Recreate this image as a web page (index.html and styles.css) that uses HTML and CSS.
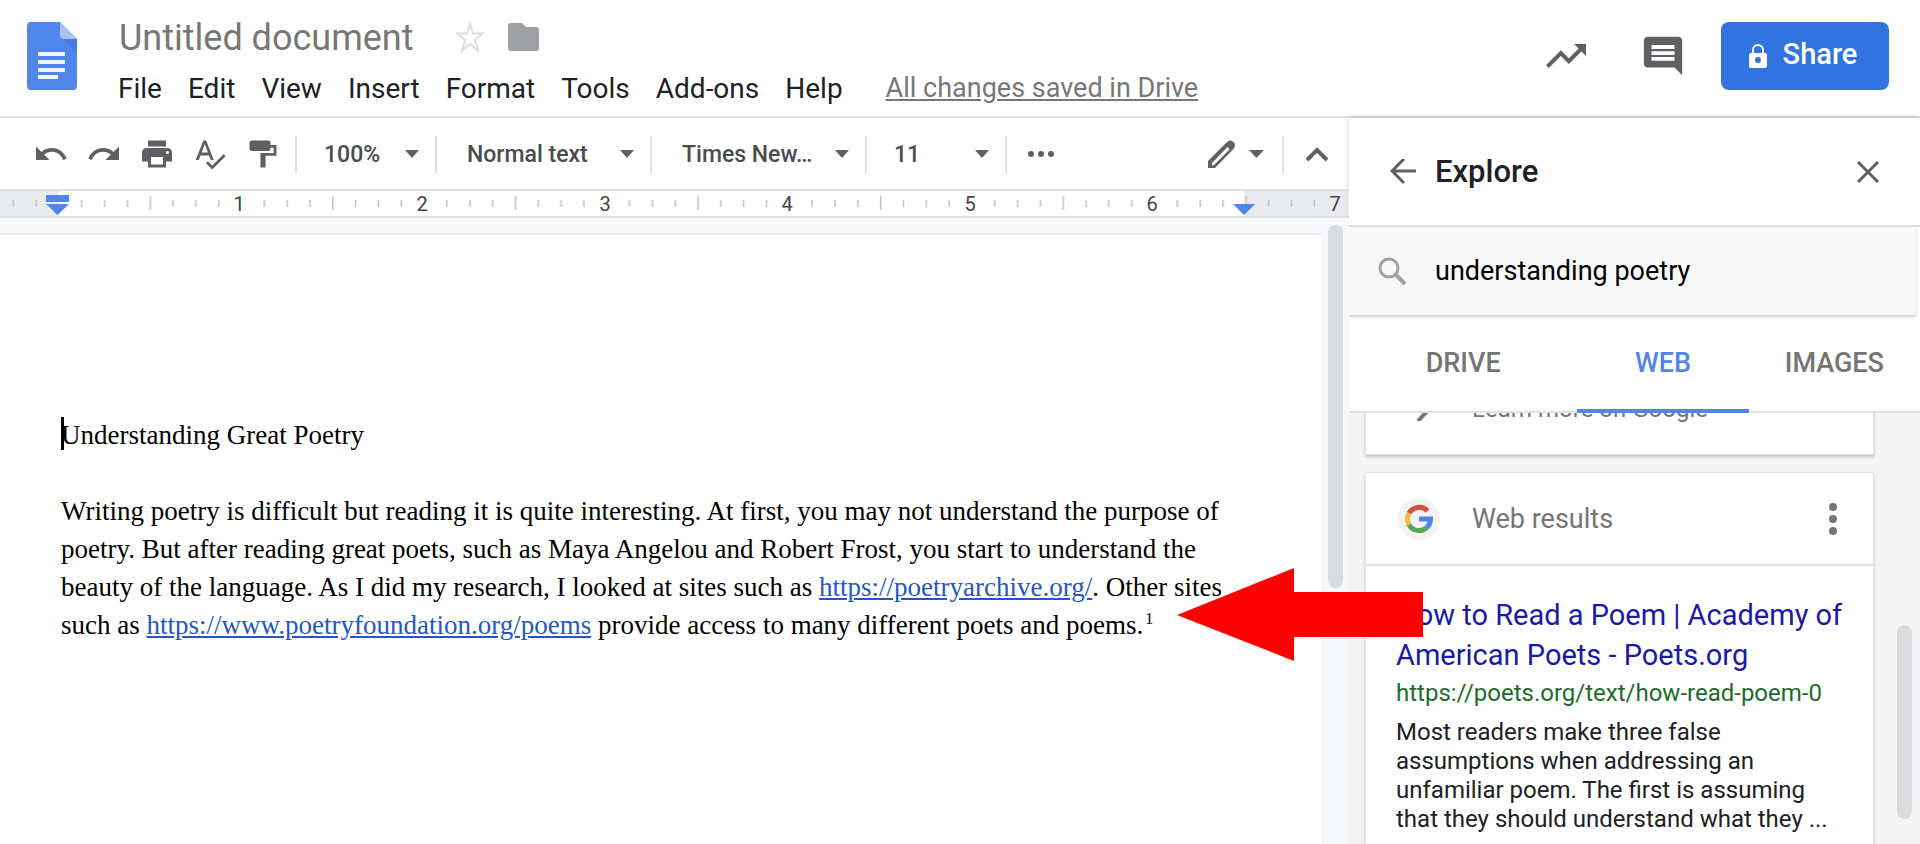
FILE: index.html
```
<!DOCTYPE html>
<html lang="en">
<head>
<meta charset="utf-8">
<title>Untitled document</title>
<link rel="stylesheet" href="styles.css">
</head>
<body>

<header class="top">
  <svg class="logo" viewBox="0 0 50 68">
    <path fill="#5086ec" d="M4 0h29l17 17v47a4 4 0 0 1-4 4H4a4 4 0 0 1-4-4V4a4 4 0 0 1 4-4z"/>
    <path fill="#3f6fd0" opacity=".5" d="M36 17h14v14z"/>
    <path fill="#a9c3f7" d="M33 0l17 17H37a4 4 0 0 1-4-4z"/>
    <path fill="#f1f5fe" d="M11 30h27v4H11zM11 38h27v4H11zM11 46h27v4H11zM11 53h20v4H11z"/>
  </svg>
  <div class="titles">
    <div class="titlerow">
      <input class="title" type="text" value="Untitled document" aria-label="Document name">
      <button class="ib" aria-label="Star"><svg width="30" height="32" viewBox="0 0 30 32"><path fill="none" stroke="#dcdcdc" stroke-width="2" d="M15 3l3 9.500h9.500l-7.500 6.500 3 10.500-8-6.500-8 6.500 3-10.500-7.500-6.500H12z"/></svg></button>
      <button class="ib" aria-label="Move to folder"><svg width="31" height="28" viewBox="0 0 31 28"><path fill="#9fa0a4" d="M3 0h11l4 4h10a3 3 0 0 1 3 3v18a3 3 0 0 1-3 3H3a3 3 0 0 1-3-3V3a3 3 0 0 1 3-3z"/></svg></button>
    </div>
    <nav class="menu">
      <button>File</button>
      <button>Edit</button>
      <button>View</button>
      <button>Insert</button>
      <button>Format</button>
      <button>Tools</button>
      <button>Add-ons</button>
      <button>Help</button>
      <a class="saved" href="#">All changes saved in Drive</a>
    </nav>
  </div>
  <div class="actions">
    <button class="ib" aria-label="Activity"><svg width="48" height="48" viewBox="0 0 24 24"><path d="M16 6l2.290 2.290-4.880 4.880-4-4L2 16.590 3.410 18l6-6 4 4 6.300-6.290L22 12V6z"/></svg></button>
    <button class="ib" aria-label="Comments"><svg width="46" height="46" viewBox="0 0 24 24"><path d="M22 4c0-1.100-.9-2-2-2H4c-1.100 0-2 .9-2 2v12c0 1.100.9 2 2 2h14l4 4zM18 14.500H6v-2h12zm0-3H6v-2h12zm0-3.200H6v-2h12z"/></svg></button>
    <button class="share">
      <svg width="18" height="24" viewBox="0 0 18 24"><path fill="none" stroke="#fff" stroke-width="2" d="M4 10V6a5 5 0 0 1 10 0v4"/><path fill="#fff" fill-rule="evenodd" d="M2 9h14a2 2 0 0 1 2 2v11a2 2 0 0 1-2 2H2a2 2 0 0 1-2-2V11a2 2 0 0 1 2-2zm7 4a3 3 0 1 0 0 6 3 3 0 0 0 0-6z"/></svg>
      <span>Share</span>
    </button>
  </div>
</header>

<div class="work">
  <main class="editor">
    <div class="toolbar">
      <button class="tb" aria-label="Undo"><svg viewBox="0 0 24 24"><path d="M12.500 8c-2.650 0-5.050.99-6.900 2.600L2 7v9h9l-3.620-3.620c1.390-1.160 3.160-1.880 5.120-1.880 3.540 0 6.550 2.310 7.600 5.500l2.370-.78C21.080 11.030 17.150 8 12.500 8z"/></svg></button>
      <button class="tb" aria-label="Redo"><svg viewBox="0 0 24 24"><path d="M18.400 10.600C16.550 8.990 14.150 8 11.500 8c-4.650 0-8.580 3.030-9.960 7.220L3.900 16c1.050-3.190 4.050-5.500 7.600-5.500 1.950 0 3.730.72 5.120 1.880L13 16h9V7l-3.600 3.600z"/></svg></button>
      <button class="tb" aria-label="Print"><svg viewBox="0 0 24 24"><path d="M19 8H5c-1.660 0-3 1.340-3 3v6h4v4h12v-4h4v-6c0-1.660-1.340-3-3-3zm-3 11H8v-5h8v5zm3-7c-.55 0-1-.45-1-1s.45-1 1-1 1 .45 1 1-.45 1-1 1zm-1-9H6v4h12V3z"/></svg></button>
      <button class="tb" aria-label="Spelling"><svg viewBox="0 0 24 24"><path d="M12.450 16h2.090L9.430 3H7.570L2.460 16h2.090l1.120-3h5.640l1.140 3zm-6.020-5L8.500 5.480 10.570 11H6.430zM21 12.200l-7.500 7.500L10.600 16.800l-1.300 1.300 4.200 4.200L22.400 13.500z"/></svg></button>
      <button class="tb" aria-label="Paint format"><svg viewBox="0 0 24 24"><path d="M4.500 3h11a1.500 1.500 0 0 1 1.500 1.500V6h4v7.200h-7.300V21h-3.400v-9.700h8.800V7.900H17V8.500A1.500 1.500 0 0 1 15.500 10h-11A1.500 1.500 0 0 1 3 8.500v-4A1.500 1.500 0 0 1 4.500 3z"/></svg></button>
      <div class="drop narrow first"><select aria-label="Zoom"><option>100%</option></select></div>
      <div class="drop"><select aria-label="Styles"><option>Normal text</option></select></div>
      <div class="drop"><select aria-label="Font"><option>Times New…</option></select></div>
      <div class="drop narrow"><select aria-label="Font size"><option>11</option></select></div>
      <button class="more" aria-label="More"><svg width="28" height="8" viewBox="0 0 28 8"><circle cx="4" cy="4" r="3"/><circle cx="14" cy="4" r="3"/><circle cx="24" cy="4" r="3"/></svg></button>
      <button class="mode" aria-label="Editing mode">
        <svg width="28" height="28" viewBox="0 0 28 28"><path fill-rule="evenodd" d="M0 21L19 2q3.500-3 6.500 0t0 7L7 28H0zM4 23v2.500h1.500L21.500 9.500l-2-2.500z"/></svg>
        <svg width="15" height="8" viewBox="0 0 15 8"><path d="M0 0h15L7.500 8z"/></svg>
      </button>
      <button class="hide" aria-label="Hide the menus"><svg width="24" height="15" viewBox="0 0 24 15"><path fill="none" stroke="#5f6064" stroke-width="4" d="M2 13L12 3l10 10"/></svg></button>
    </div>

    <svg class="ruler" height="25" viewBox="0 0 1349 25" preserveAspectRatio="xMinYMin slice">
      <defs>
        <!-- one inch of marks, half inch at the left edge -->
        <pattern id="inch" x="149.500" y="0" width="182.600" height="25" patternUnits="userSpaceOnUse">
          <path fill="#bfc0c2" d="M0 5h1.500v14H0zM22.800 9h1.500v7h-1.500zM45.600 9h1.500v7h-1.500zM68.500 9h1.500v7h-1.500zM114 9h1.500v7H114zM137 9h1.500v7H137zM159.800 9h1.500v7h-1.500z"/>
        </pattern>
      </defs>
      <path fill="#e8eaed" d="M0 0h59v25H0zM1245 0h104v25H1245z"/>
      <path fill="url(#inch)" d="M0 0h1349v25H0z"/>
      <text x="239" y="20">1</text>
      <text x="422" y="20">2</text>
      <text x="605" y="20">3</text>
      <text x="787" y="20">4</text>
      <text x="970" y="20">5</text>
      <text x="1152" y="20">6</text>
      <text x="1335" y="20">7</text>
      <path fill="#5086ec" d="M46 4h23v7H46zM46 13h23L57.500 24zM1233 13h22l-11 11z"/>
    </svg>

    <div class="canvas">
      <article class="paper">
        <p class="head">Understanding Great Poetry</p>
        <p>Writing poetry is difficult but reading it is quite interesting. At first, you may not understand the purpose of poetry. But after reading great poets, such as Maya Angelou and Robert Frost, you start to understand the beauty of the language. As I did my research, I looked at sites such as <a href="#">https://poetryarchive.org/</a>. Other sites such as <a href="#">https://www.poetryfoundation.org/poems</a> provide access to many different poets and poems.<sup>1</sup></p>
      </article>
      <div class="track"><div class="thumb docthumb"></div></div>
    </div>

    <svg class="arrow" width="246" height="93" viewBox="0 0 246 93"><path fill="#f00" d="M0 47L117 0v24h129v45H117v24z"/></svg>
  </main>

  <aside class="explore">
    <div class="exhead">
      <button class="ib" aria-label="Back"><svg width="26" height="26" viewBox="0 0 26 26"><path fill="none" stroke="#5f6064" stroke-width="3" d="M26 12H3M14 0L2 12l12 12"/></svg></button>
      <h2>Explore</h2>
      <button class="ib" aria-label="Close"><svg width="22" height="22" viewBox="0 0 22 22"><path fill="none" stroke="#5f6064" stroke-width="3" d="M1 1l20 20M21 1L1 21"/></svg></button>
    </div>
    <div class="search">
      <svg width="29" height="28" viewBox="0 0 29 28"><g fill="none" stroke="#a2a2a2"><circle cx="11" cy="11" r="9" stroke-width="3"/><path stroke-width="4" d="M17 17l10 10"/></g></svg>
      <input type="text" value="understanding poetry" aria-label="Search">
    </div>
    <div class="tabs">
      <button class="drive">DRIVE</button>
      <button class="on">WEB</button>
      <button>IMAGES</button>
    </div>
    <div class="results">
      <div class="cards">
        <section class="card google">
          <svg width="28" height="28" viewBox="0 0 28 28"><path fill="none" stroke="#757575" stroke-width="4" d="M8 28L22 13"/></svg>
          <a href="#">Learn more on Google</a>
        </section>
        <section class="card">
          <div class="cardhead">
            <svg width="42" height="42" viewBox="0 0 42 42">
              <circle cx="21" cy="21" r="21" fill="#f3f3f3"/>
              <g fill="none" stroke-width="5">
                <path stroke="#d85140" d="M29.500 13A11.500 11.500 0 0 0 11 15.300"/>
                <path stroke="#f1bd42" d="M11 15.300A11.500 11.500 0 0 0 11 26.700"/>
                <path stroke="#58a55c" d="M11 26.700A11.500 11.500 0 0 0 28.700 29.600"/>
                <path stroke="#5383ec" d="M28.700 29.600A11.500 11.500 0 0 0 32.500 21H21"/>
              </g>
            </svg>
            <span>Web results</span>
            <button class="ib" aria-label="Options"><svg width="8" height="32" viewBox="0 0 8 32"><g fill="#757575"><circle cx="4" cy="4" r="4"/><circle cx="4" cy="16" r="4"/><circle cx="4" cy="28" r="4"/></g></svg></button>
          </div>
          <div class="hit">
            <a class="hitname" href="#">How to Read a Poem | Academy of American Poets - Poets.org</a>
            <cite>https://poets.org/text/how-read-poem-0</cite>
            <p>Most readers make three false assumptions when addressing an unfamiliar poem. The first is assuming that they should understand what they ...</p>
          </div>
        </section>
      </div>
      <div class="track"><div class="thumb webthumb"></div></div>
    </div>
  </aside>
</div>

</body>
</html>
```

FILE: styles.css
```
* {box-sizing:border-box;}
body {margin:0; height:100vh; overflow:hidden; display:flex; flex-direction:column; background:#fff; font-family:Roboto,Arial,sans-serif; color:#202124;}
button,input,select {font-family:inherit; background:none; border:0; padding:0; margin:0; outline:0;}
svg {display:block; flex:none; fill:#5f6064;}
p,h2 {margin:0; font-weight:normal;}
.ib {flex:none;}

/* title, menus, share */
.top {display:flex; height:118px; flex:none; padding:0 31px 0 27px; border-bottom:2px solid #dfe0e2;}
.logo {width:50px; height:68px; margin-top:22px;}
.titles {margin-left:41px; padding-top:14px;}
.titlerow {display:flex; align-items:center; height:46px; gap:23px; padding-left:1px;}
.title {width:313px; padding-top:2px; font-size:36px; color:#777;}
.menu {display:flex; align-items:center; gap:26px; height:56px;}
.menu button {font-size:28px; color:#202124;}
.saved {font-size:27px; color:#777; margin-left:17px; text-decoration:underline;}
.actions {display:flex; align-items:center; height:112px; margin-left:auto;}
.actions .ib + .ib {margin:0 35px 0 50px;}
.share {display:flex; align-items:center; justify-content:center; gap:16px; width:168px; height:68px; padding-right:4px; border-radius:8px; background:#3174e0; color:#fff; font-size:29px; font-weight:500;}
.share span {padding-bottom:4px;}

.work {display:flex; flex:1; min-height:0;}
.editor {position:relative; z-index:2; flex:1; min-width:0; display:flex; flex-direction:column;}

.toolbar {display:flex; align-items:center; height:73px; flex:none; padding:1px 0 0 24px; border-bottom:2px solid #dfe0e2;}
.tb {width:53px; display:flex; justify-content:center;}
.tb svg {width:36px; height:36px;}
.drop {width:215px; height:37px; border-left:2px solid #dfe0e2; padding:0 16px 0 30px; display:flex; align-items:center;}
.drop.narrow {width:140px; padding-left:27px;}
.drop.first {margin-left:6px;}
.drop select {flex:1; width:100%; appearance:none; font-size:23px; font-weight:500; color:#4b4c4f;}
.drop:after {content:""; border:solid transparent; border-width:8px 7px 0; border-top-color:#5f6064;}
.more {height:37px; border-left:2px solid #dfe0e2; padding-left:20px;}
.mode {display:flex; align-items:center; gap:13px; margin-left:auto; padding-right:18px;}
.hide {width:67px; height:37px; border-left:2px solid #dfe0e2; display:flex; align-items:center; justify-content:center;}

.ruler {width:100%; height:25px;}
.ruler text {font-size:20px; fill:#444; text-anchor:middle;}

.canvas {display:flex; flex:1; min-height:0; overflow:hidden; border-top:2px solid #dfe0e2; background:#f6f8fb;}
.paper {flex:1; margin-top:15px; padding:181px 76px 0 61px; border-top:2px solid #eceef0; background:#fff; font:27px/38px "Liberation Serif",serif; color:#000;}
.paper p {margin-bottom:38px;}
.paper .head:before {content:""; position:absolute; width:3px; height:33px; margin-top:1px; background:#000;}
.paper a {color:#2457c5;}
.paper sup {font-size:16px; line-height:0; padding-left:2px;}
.track {width:28px; flex:none; padding:7px 6px 0 7px;}
.thumb {width:15px; border-radius:8px; background:#dadce0;}
.docthumb {height:363px;}
.arrow {position:absolute; right:-74px; top:450px;}

/* side panel */
.explore {width:571px; flex:none; display:flex; flex-direction:column; background:#fff; box-shadow:0 0 6px rgba(0,0,0,.2);}
.exhead {display:flex; align-items:center; height:109px; flex:none; padding:0 41px; border-bottom:2px solid #dfe0e2;}
.exhead h2 {flex:1; margin-left:19px; font-size:31px; font-weight:500;}
.search {display:flex; align-items:center; height:88px; flex:none; margin-right:4px; padding-left:29px; background:#f8f8f8; box-shadow:0 2px 3px rgba(0,0,0,.2);}
.search input {flex:1; margin-left:28px; font-size:27px; color:#000;}
.tabs {display:flex; height:98px; flex:none; padding-top:2px; border-bottom:2px solid #e2e2e2;}
.tabs button {flex:3; margin-bottom:-2px; font-size:27px; font-weight:500; color:#757575; border-bottom:4px solid transparent;}
.tabs .drive {flex:4;}
.tabs .on {color:#5086ec; border-bottom-color:#5086ec;}
.results {display:flex; flex:1; min-height:0; overflow:hidden; background:#f5f5f5;}
.cards {flex:1; padding-left:16px;}
.card {background:#fff; border:1px solid #e3e3e3; box-shadow:0 2px 3px rgba(0,0,0,.2); margin-bottom:17px;}
.google {display:flex; margin-top:-57px; height:99px; padding:36px 30px 0 44px;}
.google a {margin-left:34px; font-size:24px; line-height:32px; color:#757575; text-decoration:none;}
.cardhead {display:flex; align-items:center; height:93px; padding:0 36px 0 32px; border-bottom:2px solid #e3e3e3;}
.cardhead span {flex:1; margin-left:32px; font-size:27px; color:#757575;}
.hit {padding:29px 24px 40px 30px;}
.hitname {display:block; font-size:29px; line-height:40px; color:#1a1aa6; text-decoration:none;}
cite {display:block; font-size:24px; line-height:36px; font-style:normal; color:#1e6b2a;}
.hit p {margin-top:7px; font-size:24px; line-height:29px;}
.results .track {width:46px; padding:212px 8px 0 23px;}
.webthumb {height:194px;}
```
